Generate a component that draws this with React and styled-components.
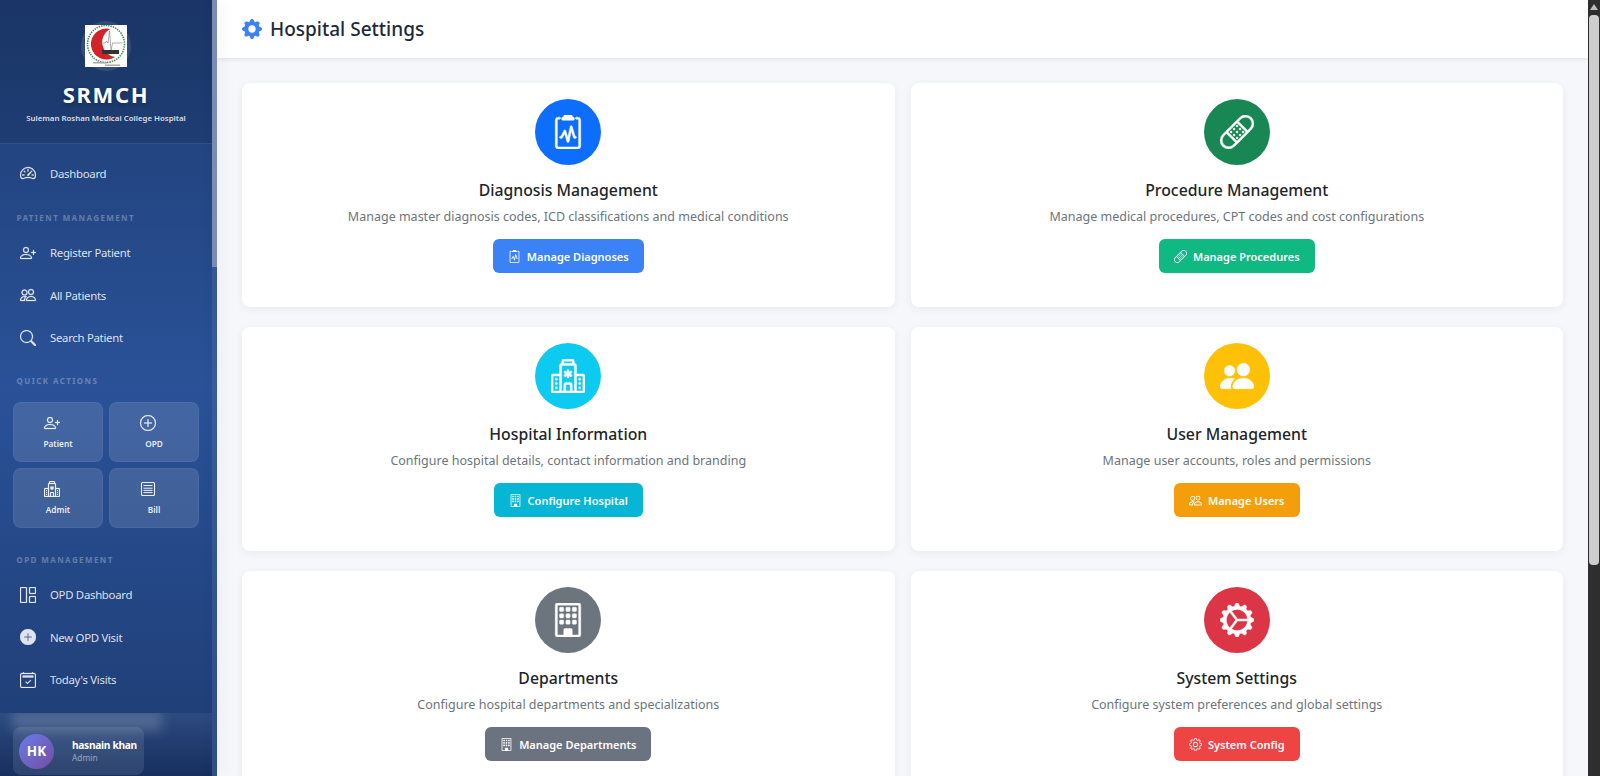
import React from "react";
import styled, { createGlobalStyle } from "styled-components";
import {
  BsSpeedometer2,
  BsPersonPlus,
  BsPeople,
  BsPeopleFill,
  BsSearch,
  BsPlusCircle,
  BsPlusCircleFill,
  BsHospital,
  BsGrid1X2,
  BsCalendar2Check,
  BsClipboard2Pulse,
  BsBandaid,
  BsBuilding,
  BsGear,
  BsGearFill,
  BsGearWideConnected,
} from "react-icons/bs";

const GlobalStyle = createGlobalStyle`
  html, body {
    margin: 0;
    height: 100%;
    overflow: hidden;
    background: #f5f7fb;
    font-family: "Noto Sans", "Open Sans", sans-serif;
  }
  * { box-sizing: border-box; }
`;

const Page = styled.div`
  display: flex;
  width: 1600px;
  height: 776px;
  overflow: hidden;
`;

const Sidebar = styled.aside`
  position: relative;
  display: flex;
  flex-direction: column;
  flex: 0 0 212px;
  height: 776px;
  overflow: hidden;
  color: #fff;
  background: linear-gradient(180deg, #1e3c72 0%, #2a5298 50%, #1e3c72 100%);
`;

const Brand = styled.div`
  display: flex;
  flex-direction: column;
  align-items: center;
  height: 144px;
  padding-top: 25px;
  background: rgba(0, 0, 0, 0.1);
  border-bottom: 1px solid rgba(255, 255, 255, 0.1);
`;

const LogoWrap = styled.div`
  position: relative;
  width: 42px;
  height: 42px;
  &::before {
    content: "";
    position: absolute;
    inset: -4px;
    border-radius: 50%;
    background: rgba(255, 255, 255, 0.1);
  }
  svg {
    position: relative;
    display: block;
  }
`;

const BrandName = styled.div`
  margin-top: 13px;
  font-size: 22px;
  line-height: 28px;
  font-weight: 700;
  letter-spacing: 1.6px;
  text-shadow: 0 2px 4px rgba(0, 0, 0, 0.3);
`;

const BrandSub = styled.div`
  margin-top: 4px;
  font-size: 7.85px;
  line-height: 12px;
  font-weight: 600;
  color: rgba(255, 255, 255, 0.85);
`;

const Nav = styled.nav`
  display: flex;
  flex-direction: column;
  padding-top: 8px;
`;

const NavItem = styled.a`
  display: flex;
  align-items: center;
  gap: 14px;
  height: 42.5px;
  padding-left: 20px;
  font-size: 11.4px;
  letter-spacing: -0.3px;
  color: rgba(255, 255, 255, 0.85);
  svg {
    flex: 0 0 16px;
    width: 16px;
    height: 16px;
    stroke: currentColor;
    stroke-width: 0.25;
  }
`;

const SectionLabel = styled.div`
  padding: 0 16.5px;
  margin-top: ${(props) => props.$top}px;
  margin-bottom: ${(props) => props.$bottom}px;
  font-size: 8px;
  line-height: 12px;
  font-weight: 700;
  letter-spacing: 1.4px;
  text-transform: uppercase;
  color: rgba(255, 255, 255, 0.3);
`;

const QuickGrid = styled.div`
  display: grid;
  grid-template-columns: 90px 90px;
  grid-auto-rows: 60px;
  gap: 6px;
  padding-left: 13px;
`;

const QuickCard = styled.a`
  display: flex;
  flex-direction: column;
  align-items: center;
  padding-top: 12px;
  background: rgba(255, 255, 255, 0.12);
  border: 1px solid rgba(255, 255, 255, 0.05);
  border-radius: 8px;
  font-size: 8.3px;
  line-height: 12px;
  font-weight: 600;
  color: rgba(255, 255, 255, 0.9);
  svg {
    width: 16px;
    height: 16px;
    margin: 0 12px 7px 0;
    stroke: currentColor;
    stroke-width: 0.2;
  }
`;

const Footer = styled.div`
  position: absolute;
  left: 0;
  right: 0;
  bottom: 0;
  height: 63px;
  padding: 14px 0 0 13px;
  overflow: hidden;
  background: linear-gradient(180deg, rgba(255, 255, 255, 0.06), rgba(14, 34, 74, 0.5));
`;

const Haze = styled.div`
  position: absolute;
  left: 12px;
  top: -2px;
  width: 150px;
  height: 20px;
  background: rgba(255, 255, 255, 0.18);
  filter: blur(6px);
`;

const UserCard = styled.div`
  position: relative;
  display: flex;
  align-items: center;
  gap: 18px;
  width: 131px;
  height: 48px;
  padding-left: 6px;
  background: rgba(255, 255, 255, 0.1);
  border-radius: 8px;
`;

const Avatar = styled.div`
  display: flex;
  align-items: center;
  justify-content: center;
  flex: 0 0 35px;
  height: 35px;
  border-radius: 50%;
  background: linear-gradient(135deg, #667eea, #764ba2);
  font-size: 13.5px;
  font-weight: 700;
`;

const UserText = styled.div`
  margin-top: -1px;
`;

const UserName = styled.div`
  font-size: 10.2px;
  line-height: 13px;
  font-weight: 700;
  letter-spacing: -0.3px;
  white-space: nowrap;
`;

const UserRole = styled.div`
  font-size: 8.4px;
  line-height: 11px;
  color: rgba(255, 255, 255, 0.5);
`;

const SideScroll = styled.div`
  position: relative;
  z-index: 2;
  flex: 0 0 5px;
  height: 776px;
  background: linear-gradient(180deg, #2f4d86, #3a5c9c 50%, #2f4d86);
  box-shadow: 4px 0 16px rgba(0, 0, 0, 0.08);
`;

const SideThumb = styled.div`
  height: 267px;
  background: #7a8cb3;
`;

const Main = styled.main`
  flex: 1;
  min-width: 0;
  height: 776px;
  overflow: hidden;
  background: #f5f7fb;
`;

const TopBar = styled.header`
  display: flex;
  align-items: center;
  gap: 8px;
  height: 58px;
  padding: 0 25px;
  background: #fff;
  box-shadow: 0 1px 4px rgba(0, 0, 0, 0.1);
  svg {
    width: 20px;
    height: 20px;
    color: #3b82f6;
  }
`;

const PageTitle = styled.h1`
  margin: 0;
  font-size: 19px;
  font-weight: 500;
  color: #1e293b;
`;

const CardGrid = styled.div`
  display: grid;
  grid-template-columns: 1fr 1fr;
  grid-auto-rows: 224px;
  column-gap: 16px;
  row-gap: 20px;
  padding: 25px 25px 0;
`;

const Card = styled.section`
  display: flex;
  flex-direction: column;
  align-items: center;
  padding-top: 16px;
  background: #fff;
  border-radius: 8px;
  box-shadow: 0 2px 8px rgba(0, 0, 0, 0.06);
`;

const IconCircle = styled.div`
  display: flex;
  align-items: center;
  justify-content: center;
  width: 66px;
  height: 66px;
  border-radius: 50%;
  background: ${(props) => props.$bg};
  color: #fff;
  svg {
    width: 34px;
    height: 34px;
    stroke: currentColor;
    stroke-width: 0.2;
  }
`;

const CardTitle = styled.h3`
  margin: 13px 0 0;
  font-size: 15.8px;
  line-height: 24px;
  font-weight: 500;
  color: #212529;
`;

const CardText = styled.p`
  margin: 3px 0 0;
  font-size: 12.5px;
  line-height: 24px;
  color: #6c757d;
`;

const ActionButton = styled.a`
  display: inline-flex;
  align-items: center;
  gap: 6px;
  height: 34px;
  margin-top: 10px;
  padding: 0 15px;
  border-radius: 6px;
  background: ${(props) => props.$bg};
  color: #fff;
  font-size: 11px;
  font-weight: 600;
  svg {
    width: 13px;
    height: 13px;
  }
`;

const PageScroll = styled.div`
  position: relative;
  flex: 0 0 12px;
  height: 776px;
  padding-top: 15px;
  background: #2e2e2e;
`;

const PageThumb = styled.div`
  height: 550px;
  margin: 0 1px;
  background: #cdcdcd;
  border-radius: 4px;
`;

const Arrow = styled.div`
  position: absolute;
  top: 4px;
  left: 2px;
  width: 0;
  height: 0;
  border-left: 4px solid transparent;
  border-right: 4px solid transparent;
  border-bottom: 6px solid #bdbdbd;
`;

function Logo() {
  return (
    <svg width="42" height="42" viewBox="0 0 42 42">
      <rect width="42" height="42" fill="#fff" />
      <circle cx="21" cy="19" r="18.5" fill="none" stroke="#3f8f4f" strokeWidth="1.6" strokeDasharray="1.4 1" />
      <path d="M25 4A15.5 15.5 0 1 0 30 32A15 15 0 0 1 25 4Z" fill="#d4222a" />
      <path d="M13 18h7l1.5-2 1.5 2 1.5-12 1.5 20 1.5-8h10" fill="none" stroke="#777" strokeWidth="0.6" />
      <rect x="17" y="25" width="17" height="4" fill="#333" />
      <rect x="8" y="37" width="14" height="1.5" fill="#aaa" />
      <rect x="20" y="39.5" width="15" height="1.5" fill="#aaa" />
    </svg>
  );
}

function BillIcon() {
  return (
    <svg viewBox="0 0 16 16" fill="none" stroke="currentColor">
      <rect x="1.5" y="1.5" width="13" height="13" rx="1" strokeWidth="1.1" />
      <path d="M3.5 4.5h9M3.5 7.2h9M3.5 9.4h9M3.5 11.6h9" strokeWidth="1" />
    </svg>
  );
}

const cards = [
  {
    title: "Diagnosis Management",
    text: "Manage master diagnosis codes, ICD classifications and medical conditions",
    circle: "#0d6efd",
    button: "#3b82f6",
    label: "Manage Diagnoses",
    Icon: BsClipboard2Pulse,
    ButtonIcon: BsClipboard2Pulse,
  },
  {
    title: "Procedure Management",
    text: "Manage medical procedures, CPT codes and cost configurations",
    circle: "#198754",
    button: "#10b981",
    label: "Manage Procedures",
    Icon: BsBandaid,
    ButtonIcon: BsBandaid,
  },
  {
    title: "Hospital Information",
    text: "Configure hospital details, contact information and branding",
    circle: "#0dcaf0",
    button: "#06b6d4",
    label: "Configure Hospital",
    Icon: BsHospital,
    ButtonIcon: BsBuilding,
  },
  {
    title: "User Management",
    text: "Manage user accounts, roles and permissions",
    circle: "#ffc107",
    button: "#f59e0b",
    label: "Manage Users",
    Icon: BsPeopleFill,
    ButtonIcon: BsPeople,
  },
  {
    title: "Departments",
    text: "Configure hospital departments and specializations",
    circle: "#6c757d",
    button: "#6b7280",
    label: "Manage Departments",
    Icon: BsBuilding,
    ButtonIcon: BsBuilding,
  },
  {
    title: "System Settings",
    text: "Configure system preferences and global settings",
    circle: "#dc3545",
    button: "#ef4444",
    label: "System Config",
    Icon: BsGearWideConnected,
    ButtonIcon: BsGear,
  },
];

export default function App() {
  return (
    <Page>
      <GlobalStyle />
      <Sidebar>
        <Brand>
          <LogoWrap>
            <Logo />
          </LogoWrap>
          <BrandName>SRMCH</BrandName>
          <BrandSub>Suleman Roshan Medical College Hospital</BrandSub>
        </Brand>
        <Nav>
          <NavItem><BsSpeedometer2 />Dashboard</NavItem>
          <SectionLabel $top={17} $bottom={8}>Patient Management</SectionLabel>
          <NavItem><BsPersonPlus />Register Patient</NavItem>
          <NavItem><BsPeople />All Patients</NavItem>
          <NavItem><BsSearch />Search Patient</NavItem>
          <SectionLabel $top={16} $bottom={15}>Quick Actions</SectionLabel>
          <QuickGrid>
            <QuickCard><BsPersonPlus />Patient</QuickCard>
            <QuickCard><BsPlusCircle />OPD</QuickCard>
            <QuickCard><BsHospital />Admit</QuickCard>
            <QuickCard><BillIcon />Bill</QuickCard>
          </QuickGrid>
          <SectionLabel $top={26} $bottom={7.5}>OPD Management</SectionLabel>
          <NavItem><BsGrid1X2 />OPD Dashboard</NavItem>
          <NavItem><BsPlusCircleFill />New OPD Visit</NavItem>
          <NavItem><BsCalendar2Check />Today's Visits</NavItem>
        </Nav>
        <Footer>
          <Haze />
          <UserCard>
            <Avatar>HK</Avatar>
            <UserText>
              <UserName>hasnain khan</UserName>
              <UserRole>Admin</UserRole>
            </UserText>
          </UserCard>
        </Footer>
      </Sidebar>
      <SideScroll>
        <SideThumb />
      </SideScroll>
      <Main>
        <TopBar>
          <BsGearFill />
          <PageTitle>Hospital Settings</PageTitle>
        </TopBar>
        <CardGrid>
          {cards.map(({ title, text, circle, button, label, Icon, ButtonIcon }) => (
            <Card key={title}>
              <IconCircle $bg={circle}>
                <Icon />
              </IconCircle>
              <CardTitle>{title}</CardTitle>
              <CardText>{text}</CardText>
              <ActionButton $bg={button}>
                <ButtonIcon />
                {label}
              </ActionButton>
            </Card>
          ))}
        </CardGrid>
      </Main>
      <PageScroll>
        <Arrow />
        <PageThumb />
      </PageScroll>
    </Page>
  );
}
